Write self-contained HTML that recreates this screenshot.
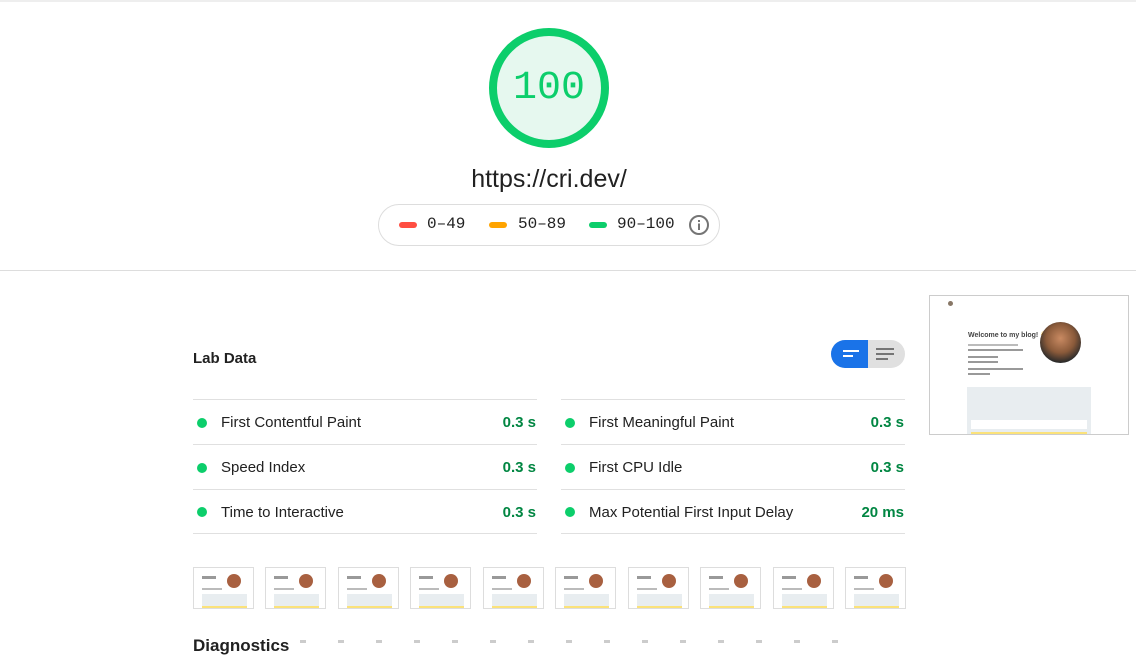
<!DOCTYPE html>
<html><head><style>
*{margin:0;padding:0;box-sizing:border-box}
body{width:1136px;height:643px;overflow:hidden;background:#fff;font-family:"Liberation Sans",sans-serif;position:relative;color:#212121}
.abs{position:absolute}
.mono{font-family:"Liberation Mono",monospace}
.row{position:absolute;height:45px;border-top:1px solid #e0e0e0;font-size:15px;display:flex;align-items:center;padding-top:1px}
.row .d{width:10px;height:10px;border-radius:50%;background:#0cce6b;margin:0 14px 0 4px}
.row .v{margin-left:auto;color:#018642;font-weight:bold;margin-right:1px}
.th{position:absolute;top:567px;width:61px;height:42px;border:1px solid #ddd;background:#fff}
.th i{position:absolute;display:block}
</style></head><body>
<div class="abs" style="left:0;top:0;width:1136px;height:2px;background:#eee"></div>
<div class="abs" style="left:489px;top:28px;width:120px;height:120px;border-radius:50%;border:8px solid #0cce6b;background:#e6f8ef"></div>
<div class="abs mono" style="left:489px;top:66px;width:120px;text-align:center;font-size:40px;color:#0cce6b">100</div>
<div class="abs" style="left:400px;top:165px;width:298px;text-align:center;font-size:25px;color:#212121">https://cri.dev/</div>
<div class="abs" style="left:378px;top:204px;width:342px;height:42px;border:1px solid #ddd;border-radius:21px"></div>
<div class="abs" style="left:399px;top:222px;width:18px;height:6px;border-radius:3px;background:#ff4e42"></div>
<div class="abs mono" style="left:427px;top:215px;font-size:16px">0–49</div>
<div class="abs" style="left:489px;top:222px;width:18px;height:6px;border-radius:3px;background:#ffa400"></div>
<div class="abs mono" style="left:518px;top:215px;font-size:16px">50–89</div>
<div class="abs" style="left:589px;top:222px;width:18px;height:6px;border-radius:3px;background:#0cce6b"></div>
<div class="abs mono" style="left:617px;top:215px;font-size:16px">90–100</div>
<svg class="abs" style="left:688px;top:214px" width="22" height="22" viewBox="0 0 22 22"><circle cx="11" cy="11" r="9" fill="none" stroke="#757575" stroke-width="2"/><rect x="10" y="9.5" width="2" height="6.5" fill="#757575"/><rect x="10" y="6" width="2" height="2" fill="#757575"/></svg>
<div class="abs" style="left:0;top:270px;width:1136px;height:1px;background:#ddd"></div>

<div class="abs" style="left:193px;top:350px;font-size:15px;font-weight:bold">Lab Data</div>
<div class="abs" style="left:831px;top:340px;width:74px;height:28px;border-radius:14px;background:#e0e0e0;overflow:hidden">
 <div style="width:37px;height:28px;background:#1a73e8;position:relative">
  <i style="position:absolute;left:12px;top:10px;width:16px;height:2px;background:#fff"></i>
  <i style="position:absolute;left:12px;top:15px;width:10px;height:2px;background:#fff"></i></div>
 <i style="position:absolute;left:45px;top:8px;width:18px;height:2px;background:#757575"></i>
 <i style="position:absolute;left:45px;top:13px;width:18px;height:2px;background:#757575"></i>
 <i style="position:absolute;left:45px;top:18px;width:12px;height:2px;background:#757575"></i>
</div>

<div class="row" style="left:193px;top:399px;width:344px"><span class="d"></span>First Contentful Paint<span class="v">0.3 s</span></div>
<div class="row" style="left:193px;top:444px;width:344px"><span class="d"></span>Speed Index<span class="v">0.3 s</span></div>
<div class="row" style="left:193px;top:489px;width:344px;border-bottom:1px solid #e0e0e0"><span class="d"></span>Time to Interactive<span class="v">0.3 s</span></div>
<div class="row" style="left:561px;top:399px;width:344px"><span class="d"></span>First Meaningful Paint<span class="v">0.3 s</span></div>
<div class="row" style="left:561px;top:444px;width:344px"><span class="d"></span>First CPU Idle<span class="v">0.3 s</span></div>
<div class="row" style="left:561px;top:489px;width:344px;border-bottom:1px solid #e0e0e0"><span class="d"></span>Max Potential First Input Delay<span class="v">20 ms</span></div>

<div class="abs" style="left:929px;top:295px;width:200px;height:140px;border:1px solid #ccc;background:#fff;overflow:hidden;font-size:4px;color:#777">
 <i style="position:absolute;left:18px;top:5px;width:5px;height:5px;border-radius:50%;background:#876"></i>
 <div style="position:absolute;left:38px;top:35px;font-size:7px;font-weight:bold;color:#444">Welcome to my blog! 👋</div>
 <i style="position:absolute;left:38px;top:48px;width:50px;height:2px;background:#bbb"></i>
 <i style="position:absolute;left:38px;top:53px;width:55px;height:2px;background:#999"></i>
 <i style="position:absolute;left:38px;top:60px;width:30px;height:2px;background:#999"></i>
 <i style="position:absolute;left:38px;top:65px;width:30px;height:2px;background:#999"></i>
 <i style="position:absolute;left:38px;top:72px;width:55px;height:2px;background:#999"></i>
 <i style="position:absolute;left:38px;top:77px;width:22px;height:2px;background:#999"></i>
 <i style="position:absolute;left:110px;top:26px;width:41px;height:41px;border-radius:50%;background:radial-gradient(circle at 50% 40%,#c98a62 0,#8a5a3a 45%,#2a2a2a 75%)"></i>
 <i style="position:absolute;left:37px;top:91px;width:124px;height:50px;background:#e8edf0"></i>
 <i style="position:absolute;left:41px;top:124px;width:116px;height:9px;background:#fff"></i>
 <i style="position:absolute;left:41px;top:136px;width:116px;height:6px;background:#fbe27a"></i>
</div>

<div class="th" style="left:193px"><i style="left:8px;top:8px;width:14px;height:3px;background:#999"></i><i style="left:33px;top:6px;width:14px;height:14px;border-radius:50%;background:#a86040"></i><i style="left:8px;top:20px;width:20px;height:2px;background:#bbb"></i><i style="left:8px;top:26px;width:45px;height:12px;background:#e8edf0"></i><i style="left:8px;top:38px;width:45px;height:2px;background:#fbe27a"></i></div>
<div class="th" style="left:265px"><i style="left:8px;top:8px;width:14px;height:3px;background:#999"></i><i style="left:33px;top:6px;width:14px;height:14px;border-radius:50%;background:#a86040"></i><i style="left:8px;top:20px;width:20px;height:2px;background:#bbb"></i><i style="left:8px;top:26px;width:45px;height:12px;background:#e8edf0"></i><i style="left:8px;top:38px;width:45px;height:2px;background:#fbe27a"></i></div>
<div class="th" style="left:338px"><i style="left:8px;top:8px;width:14px;height:3px;background:#999"></i><i style="left:33px;top:6px;width:14px;height:14px;border-radius:50%;background:#a86040"></i><i style="left:8px;top:20px;width:20px;height:2px;background:#bbb"></i><i style="left:8px;top:26px;width:45px;height:12px;background:#e8edf0"></i><i style="left:8px;top:38px;width:45px;height:2px;background:#fbe27a"></i></div>
<div class="th" style="left:410px"><i style="left:8px;top:8px;width:14px;height:3px;background:#999"></i><i style="left:33px;top:6px;width:14px;height:14px;border-radius:50%;background:#a86040"></i><i style="left:8px;top:20px;width:20px;height:2px;background:#bbb"></i><i style="left:8px;top:26px;width:45px;height:12px;background:#e8edf0"></i><i style="left:8px;top:38px;width:45px;height:2px;background:#fbe27a"></i></div>
<div class="th" style="left:483px"><i style="left:8px;top:8px;width:14px;height:3px;background:#999"></i><i style="left:33px;top:6px;width:14px;height:14px;border-radius:50%;background:#a86040"></i><i style="left:8px;top:20px;width:20px;height:2px;background:#bbb"></i><i style="left:8px;top:26px;width:45px;height:12px;background:#e8edf0"></i><i style="left:8px;top:38px;width:45px;height:2px;background:#fbe27a"></i></div>
<div class="th" style="left:555px"><i style="left:8px;top:8px;width:14px;height:3px;background:#999"></i><i style="left:33px;top:6px;width:14px;height:14px;border-radius:50%;background:#a86040"></i><i style="left:8px;top:20px;width:20px;height:2px;background:#bbb"></i><i style="left:8px;top:26px;width:45px;height:12px;background:#e8edf0"></i><i style="left:8px;top:38px;width:45px;height:2px;background:#fbe27a"></i></div>
<div class="th" style="left:628px"><i style="left:8px;top:8px;width:14px;height:3px;background:#999"></i><i style="left:33px;top:6px;width:14px;height:14px;border-radius:50%;background:#a86040"></i><i style="left:8px;top:20px;width:20px;height:2px;background:#bbb"></i><i style="left:8px;top:26px;width:45px;height:12px;background:#e8edf0"></i><i style="left:8px;top:38px;width:45px;height:2px;background:#fbe27a"></i></div>
<div class="th" style="left:700px"><i style="left:8px;top:8px;width:14px;height:3px;background:#999"></i><i style="left:33px;top:6px;width:14px;height:14px;border-radius:50%;background:#a86040"></i><i style="left:8px;top:20px;width:20px;height:2px;background:#bbb"></i><i style="left:8px;top:26px;width:45px;height:12px;background:#e8edf0"></i><i style="left:8px;top:38px;width:45px;height:2px;background:#fbe27a"></i></div>
<div class="th" style="left:773px"><i style="left:8px;top:8px;width:14px;height:3px;background:#999"></i><i style="left:33px;top:6px;width:14px;height:14px;border-radius:50%;background:#a86040"></i><i style="left:8px;top:20px;width:20px;height:2px;background:#bbb"></i><i style="left:8px;top:26px;width:45px;height:12px;background:#e8edf0"></i><i style="left:8px;top:38px;width:45px;height:2px;background:#fbe27a"></i></div>
<div class="th" style="left:845px"><i style="left:8px;top:8px;width:14px;height:3px;background:#999"></i><i style="left:33px;top:6px;width:14px;height:14px;border-radius:50%;background:#a86040"></i><i style="left:8px;top:20px;width:20px;height:2px;background:#bbb"></i><i style="left:8px;top:26px;width:45px;height:12px;background:#e8edf0"></i><i style="left:8px;top:38px;width:45px;height:2px;background:#fbe27a"></i></div>

<div class="abs" style="left:193px;top:636px;font-size:17px;font-weight:bold">Diagnostics</div>
<div class="abs" style="left:300px;top:640px;width:570px;height:3px;background:repeating-linear-gradient(90deg,#ccc 0 6px,transparent 6px 38px)"></div>
</body></html>
